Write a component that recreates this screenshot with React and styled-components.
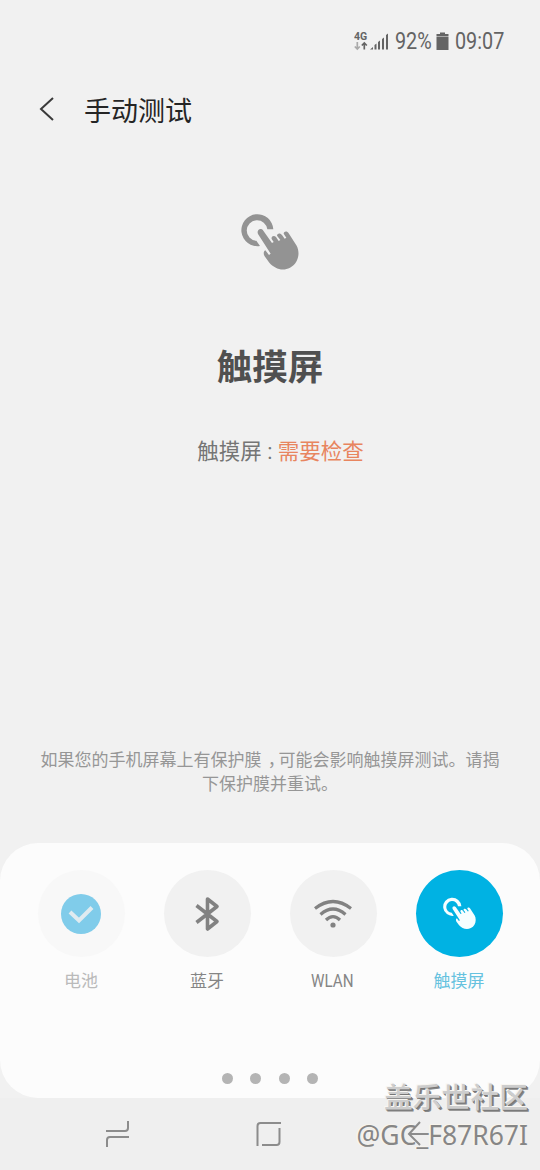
import React from "react";
import styled, { createGlobalStyle } from "styled-components";

const GlobalStyle = createGlobalStyle`
  * {
    box-sizing: border-box;
  }

  body {
    margin: 0;
    background: #f1f1f1;
    font-family: Roboto, "Noto Sans CJK SC", sans-serif;
  }
`;

const Screen = styled.div`
  position: relative;
  display: flex;
  flex-direction: column;
  width: 540px;
  height: 1170px;
  overflow: hidden;
  background: #f1f1f1;
`;

const StatusBar = styled.div`
  display: flex;
  height: 64px;
  padding: 19px 35px 0 0;
  justify-content: flex-end;
  align-items: center;
  color: #646464;
  font-size: 23px;
`;

const Condensed = styled.span`
  display: inline-block;
  width: ${(props) => props.$width}px;
  font-size: ${(props) => props.$size}px;
  white-space: nowrap;

  span {
    display: inline-block;
    transform: scaleX(${(props) => props.$scale});
    transform-origin: left;
  }
`;

const SignalIcon = styled.svg`
  margin: -2px 5px 0 0;
`;

const BatteryIcon = styled.svg`
  margin: 0 6px 0 5px;
`;

const Header = styled.header`
  display: flex;
  height: 90px;
  padding-left: 38px;
  align-items: center;
`;

const Title = styled.h1`
  margin: 5px 0 0 28px;
  color: #252525;
  font-size: 27px;
  font-weight: 400;
  line-height: 40px;
`;

const Content = styled.main`
  display: flex;
  height: 689px;
  flex-direction: column;
  align-items: center;
  padding-top: 59px;
`;

const Heading = styled.h2`
  margin: 71px 0 0;
  color: #505050;
  font-size: 35.5px;
  font-weight: 700;
  line-height: 52px;
`;

const Result = styled.p`
  margin: 42px 0 0 21px;
  color: #757575;
  font-size: 21.5px;
  line-height: 32px;

  span {
    color: #e8855f;
  }
`;

const Hint = styled.p`
  margin: auto 0 47px;
  color: #969696;
  font-size: 17px;
  line-height: 24px;
  text-align: center;
  white-space: nowrap;
`;

const Comma = styled.span`
  display: inline-block;
  width: 17px;
  padding-left: 4px;
  font-feature-settings: "halt";
`;

const Panel = styled.section`
  display: flex;
  height: 255px;
  padding: 27px 18px 14px;
  flex-direction: column;
  justify-content: space-between;
  align-items: center;
  border-radius: 38px;
  background: #fcfcfc;
`;

const TestList = styled.div`
  display: grid;
  grid-template-columns: repeat(4, 126px);
`;

const TestItem = styled.div`
  display: flex;
  flex-direction: column;
  align-items: center;
  color: ${(props) => props.$color};
  font-size: 17px;
  line-height: 26px;
`;

const Circle = styled.div`
  display: flex;
  width: 87px;
  height: 87px;
  margin-bottom: 11px;
  align-items: center;
  justify-content: center;
  border-radius: 50%;
  background: ${(props) => props.$background};
`;

const Dots = styled.div`
  display: flex;
  gap: 17.5px;

  i {
    width: 11px;
    height: 11px;
    border-radius: 50%;
    background: #b4b4b4;
  }
`;

const NavBar = styled.nav`
  height: 72px;
  background: #efefef;
`;

const Watermark = styled.div`
  position: absolute;
  right: 12px;
  bottom: 16px;
  font-family: "Noto Sans", "Noto Sans CJK SC", sans-serif;
  line-height: 38px;
  text-align: right;
  white-space: nowrap;

  strong {
    display: block;
    color: #cdcdcd;
    font-size: 28.8px;
    font-weight: 500;
    text-shadow: -1px -1px 0 #f8f6f2, 1px 1px 0 #777, 2px 2px 0 #888;
  }

  span {
    display: block;
    color: #868686;
    font-size: 26.5px;
    text-shadow: -1px -1px 0 #f8f4ec, -2px 0 0 #f8f4ec;
  }
`;

function TouchIcon({ size, color }) {
  return (
    <svg width={size} height={size} viewBox="34 40 174 170">
      <path
        d="M131 87A48 48 0 1 0 91 137L80 121.500A31 31 0 1 1 113 87Z"
        fill={color}
      />
      <path
        d="M85 101C80 90 92 80 101 91L127 128L132 125L126 116C124 108 133 104 139 110L147 122L152 119L142 106C143 98 152 97 157 104L165 115L170 112L162 100C163 92 173 92 177 99L201 136C213 159 205 190 181 202C158 214 134 204 119 187L105 168C101 161 101 153 107 150L118 164L123 160Z"
        fill={color}
      />
    </svg>
  );
}

function CheckIcon() {
  return (
    <svg width="40" height="40" viewBox="0 0 40 40">
      <circle cx="20" cy="20" r="20" fill="#80ccea" />
      <path d="M9 18L18 26.500L31 13.500" fill="none" stroke="#e0ebf0" strokeWidth="4" />
    </svg>
  );
}

function BluetoothIcon() {
  return (
    <svg width="26" height="36" viewBox="0 0 26 36">
      <path
        d="M2.500 9.500L23 25.500L13.500 33V3L23 10.500L2.500 26.500"
        fill="none"
        stroke="#828282"
        strokeWidth="3.6"
        strokeLinejoin="round"
      />
    </svg>
  );
}

function WifiIcon() {
  return (
    <svg width="40" height="30" viewBox="0 0 40 30">
      <g fill="none" stroke="#828282" strokeWidth="3.2">
        <path d="M2 9.500Q20 -4.500 38 9.500" />
        <path d="M7.500 15.500Q20 4.500 32.500 15.500" />
        <path d="M13 21Q20 14 27 21" />
      </g>
      <circle cx="20" cy="26" r="2.6" fill="#828282" />
    </svg>
  );
}

const tests = [
  { name: "电池", icon: <CheckIcon />, color: "#bababa", background: "#f8f8f8" },
  { name: "蓝牙", icon: <BluetoothIcon />, color: "#858585", background: "#f1f1f1" },
  { name: "WLAN", icon: <WifiIcon />, color: "#858585", background: "#f1f1f1" },
  {
    name: "触摸屏",
    icon: <TouchIcon size={33} color="#f6feff" />,
    color: "#66c2df",
    background: "#00b2e3",
  },
];

export default function App() {
  return (
    <Screen>
      <GlobalStyle />
      <StatusBar>
        <SignalIcon width="36" height="20" viewBox="0 0 36 20">
          <text x="0" y="8.5" fontSize="10.5" fontWeight="700" fill="#646464">
            4G
          </text>
          <path d="M3.300 11V18M0.800 15.500L3.300 18L5.800 15.500" fill="none" stroke="#aaa" strokeWidth="1.7" />
          <path d="M10.300 18.500V12M7.800 14.500L10.300 12L12.800 14.500" fill="none" stroke="#646464" strokeWidth="1.7" />
          <path
            d="M16 18.500L19 16V18.500ZM20.500 18.500V14L22.500 12.500V18.500ZM24 18.500V11L26 9.500V18.500ZM28 18.500V8L30 6.500V18.500ZM32 18.500V4L34 2.500V18.500Z"
            fill="#646464"
          />
        </SignalIcon>
        <Condensed $width={36} $scale={0.86} $size={23}>
          <span>92%</span>
        </Condensed>
        <BatteryIcon width="13" height="19" viewBox="0 0 13 19">
          <path d="M4 0.500H9V2H12.500V4H0.500V2H4ZM0.500 4.600H12.500V18H0.500Z" fill="#646464" />
        </BatteryIcon>
        <Condensed $width={50} $scale={0.86} $size={23}>
          <span>09:07</span>
        </Condensed>
      </StatusBar>

      <Header>
        <svg width="18" height="26" viewBox="0 0 18 26">
          <path d="M15 2L3 13L15 24" fill="none" stroke="#3a3a3a" strokeWidth="2" />
        </svg>
        <Title>手动测试</Title>
      </Header>

      <Content>
        <TouchIcon size={58} color="#939393" />
        <Heading>触摸屏</Heading>
        <Result>
          触摸屏 : <span>需要检查</span>
        </Result>
        <Hint>
          如果您的手机屏幕上有保护膜<Comma>，</Comma>可能会影响触摸屏测试。请揭
          <br />
          下保护膜并重试。
        </Hint>
      </Content>

      <Panel>
        <TestList>
          {tests.map((test) => (
            <TestItem key={test.name} $color={test.color}>
              <Circle $background={test.background}>{test.icon}</Circle>
              {test.name === "WLAN" ? (
                <Condensed $width={44} $scale={0.82} $size={18.5}>
                  <span>WLAN</span>
                </Condensed>
              ) : (
                test.name
              )}
            </TestItem>
          ))}
        </TestList>
        <Dots>
          <i />
          <i />
          <i />
          <i />
        </Dots>
      </Panel>

      <NavBar>
        <svg width="540" height="72" viewBox="0 0 540 72" fill="none" stroke="#8c8c8c" strokeWidth="2">
          <path d="M106 33H125Q128 33 128 30V23M129 39H110Q107 39 107 42V49" />
          <path d="M257.500 48V28Q257.500 25 260.500 25H281M279.500 30V44Q279.500 47 276.500 47H262" />
          <path d="M432 36H410M420 24L409 36L420 47" />
        </svg>
      </NavBar>

      <Watermark>
        <strong>盖乐世社区</strong>
        <span>@GC_F87R67I</span>
      </Watermark>
    </Screen>
  );
}
